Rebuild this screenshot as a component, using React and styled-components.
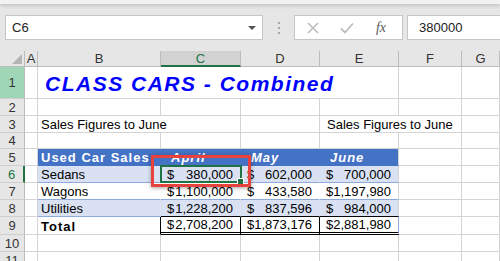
import React from "react";
import styled, { createGlobalStyle } from "styled-components";

const GRID = "#d4d4d4";
const HEAD_LINE = "#bcbcbc";
const BLUE = "#4472c4";
const LIGHT = "#d9e1f2";
const BAND_LINE = "#8ea9db";
const GREEN = "#217346";

const Global = createGlobalStyle`
  html, body { margin: 0; padding: 0; }
  body {
    width: 500px; height: 261px; overflow: hidden;
    background: #e6e6e6;
    font-family: "Liberation Sans", Arial, sans-serif;
  }
`;

const Page = styled.div`
  display: flex;
  flex-direction: column;
  width: 500px;
  height: 261px;
  overflow: hidden;
`;

const RibbonEdge = styled.div`
  flex-shrink: 0;
  height: 4px;
  background: #f3f2f1;
  box-shadow: 0 1px 4px rgba(0, 0, 0, 0.22);
  position: relative;
  z-index: 1;
`;

const FormulaBar = styled.div`
  flex-shrink: 0;
  display: flex;
  align-items: stretch;
  height: 25px;
  padding: 11px 0 11px 5px;
  background: #e6e6e6;
`;

const NameBox = styled.div`
  box-sizing: border-box;
  width: 258px;
  background: #fff;
  border: 1px solid #c6c6c6;
  display: flex;
  align-items: center;
  justify-content: space-between;
  padding: 0 6px 0 6px;
  font-size: 13px;
  color: #222;
`;

const Caret = styled.span`
  width: 0;
  height: 0;
  border-left: 4px solid transparent;
  border-right: 4px solid transparent;
  border-top: 4px solid #555;
`;

const Grip = styled.div`
  width: 31px;
  display: flex;
  flex-direction: column;
  align-items: center;
  justify-content: center;
  gap: 3px;
  span {
    width: 2px;
    height: 2px;
    background: #a6a6a6;
  }
`;

const FxBox = styled.div`
  box-sizing: border-box;
  width: 109px;
  background: #fff;
  border: 1px solid #c6c6c6;
  display: flex;
  align-items: center;
  padding-left: 1px;
`;

const FxSlot = styled.div`
  width: 34px;
  height: 100%;
  display: flex;
  align-items: center;
  justify-content: center;
  font: italic 14px "Liberation Serif", "Times New Roman", serif;
  color: #5a5a5a;
`;

const FormulaInput = styled.div`
  flex: 1;
  margin-left: 4px;
  background: #fff;
  border: 1px solid #c6c6c6;
  border-right: none;
  display: flex;
  align-items: center;
  padding-left: 11px;
  font-size: 13px;
  color: #222;
`;

const SheetWrap = styled.div`
  position: relative;
  flex: 1;
  min-height: 0;
  overflow: hidden;
  background: #fff;
`;

const Sheet = styled.div`
  display: grid;
  grid-template-columns: 25px 13px 123px 80px 79px 79px 63px 1fr;
  grid-template-rows: 16px 32px 17px 17px 16px 17px 17px 17px 17px 18px 17px 17px;
`;

const Corner = styled.div`
  position: relative;
  box-sizing: border-box;
  background: #e6e6e6;
  border-right: 1px solid ${HEAD_LINE};
  border-bottom: 1px solid ${HEAD_LINE};
  &::after {
    content: "";
    position: absolute;
    right: 2px;
    bottom: 2px;
    width: 0;
    height: 0;
    border-left: 10px solid transparent;
    border-bottom: 10px solid #b5b5b5;
  }
`;

const ColHead = styled.div`
  box-sizing: border-box;
  background: ${(p) => (p.$active ? "#d2d2d2" : "#e6e6e6")};
  border-right: 1px solid ${HEAD_LINE};
  border-bottom: ${(p) => (p.$active ? `2px solid ${GREEN}` : `1px solid ${HEAD_LINE}`)};
  display: flex;
  align-items: center;
  justify-content: center;
  font: 13px/13px "Liberation Sans", Arial, sans-serif;
  color: ${(p) => (p.$active ? GREEN : "#333")};
  padding-top: ${(p) => (p.$active ? "1px" : "0")};
`;

const RowHead = styled.div`
  box-sizing: border-box;
  background: ${(p) => p.$bg || "#e6e6e6"};
  border-right: ${(p) => (p.$active ? `2px solid ${GREEN}` : `1px solid ${HEAD_LINE}`)};
  border-bottom: 1px solid #cfcfcf;
  display: flex;
  align-items: center;
  justify-content: center;
  font: 13px/13px "Liberation Sans", Arial, sans-serif;
  color: ${(p) => (p.$active ? GREEN : "#333")};
`;

const Cell = styled.div`
  grid-column: span ${(p) => p.$span || 1};
  box-sizing: border-box;
  min-width: 0;
  background: ${(p) => p.$bg || "#fff"};
  border-right: 1px solid ${(p) => p.$br || GRID};
  border-bottom: ${(p) => p.$bb || `1px solid ${GRID}`};
  display: flex;
  align-items: flex-end;
  justify-content: ${(p) => p.$justify || "flex-start"};
  padding: 0 ${(p) => p.$pr ?? 3}px 1px ${(p) => p.$pl ?? 3}px;
  font-family: "Liberation Sans", Arial, sans-serif;
  font-size: 13px;
  line-height: 13px;
  font-weight: ${(p) => (p.$bold ? 700 : 400)};
  font-style: ${(p) => (p.$italic ? "italic" : "normal")};
  letter-spacing: ${(p) => (p.$bold ? 1 : 0)}px;
  color: ${(p) => p.$color || "#000"};
  white-space: nowrap;
`;

const Title = styled(Cell)`
  font-size: 21px;
  line-height: 21px;
  font-weight: 700;
  font-style: italic;
  letter-spacing: 1.5px;
  color: #0000ff;
  padding-left: 7px;
  padding-bottom: 4px;
`;

const Money = styled(Cell)`
  justify-content: space-between;
  padding-left: 6px;
  padding-right: 7px;
`;

const Selection = styled.div`
  position: absolute;
  left: 160px;
  top: 114px;
  width: 82px;
  height: 18px;
  box-sizing: border-box;
  border: 2px solid ${GREEN};
  pointer-events: none;
  &::after {
    content: "";
    position: absolute;
    right: -4px;
    bottom: -4px;
    width: 5px;
    height: 5px;
    background: ${GREEN};
    border: 1px solid #fff;
  }
`;

const Highlight = styled.div`
  position: absolute;
  left: 151px;
  top: 104px;
  width: 100px;
  height: 32px;
  box-sizing: border-box;
  border: 3px solid #e8423f;
  box-shadow: 0 1px 4px rgba(0, 0, 0, 0.35);
  pointer-events: none;
`;

const cols = ["A", "B", "C", "D", "E", "F", "G"];

const XIcon = () => (
  <svg width="12" height="12" viewBox="0 0 12 12">
    <path d="M1 1 L11 11 M11 1 L1 11" stroke="#bdbdbd" strokeWidth="1.6" fill="none" />
  </svg>
);

const CheckIcon = () => (
  <svg width="14" height="12" viewBox="0 0 14 12">
    <path d="M1 6.5 L5 10.5 L13 1.5" stroke="#bdbdbd" strokeWidth="1.8" fill="none" />
  </svg>
);

const Amount = ({ v, ...rest }) => (
  <Money {...rest}>
    <span>$</span>
    <span>{v}</span>
  </Money>
);

const bandRow = (label, vals, bg, lastBorder) => (
  <>
    <Cell $bg={bg} $br={bg} $bb={`1px solid ${BAND_LINE}`}>{label}</Cell>
    {vals.map((v, i) => (
      <Amount
        key={i}
        v={v}
        $bg={bg}
        $br={i === 2 ? GRID : bg}
        $bb={lastBorder ? "1px solid #000" : `1px solid ${BAND_LINE}`}
      />
    ))}
  </>
);

export default function App() {
  return (
    <Page>
      <Global />
      <RibbonEdge />
      <FormulaBar>
        <NameBox>
          <span>C6</span>
          <Caret />
        </NameBox>
        <Grip>
          <span />
          <span />
          <span />
        </Grip>
        <FxBox>
          <FxSlot><XIcon /></FxSlot>
          <FxSlot><CheckIcon /></FxSlot>
          <FxSlot>fx</FxSlot>
        </FxBox>
        <FormulaInput>380000</FormulaInput>
      </FormulaBar>
      <SheetWrap>
        <Sheet>
          <Corner />
          {cols.map((c) => (
            <ColHead key={c} $active={c === "C"}>{c}</ColHead>
          ))}

          <RowHead $bg="#a0d6b8">1</RowHead>
          <Cell />
          <Title $span={4}>CLASS CARS - Combined</Title>
          <Cell />
          <Cell />

          <RowHead>2</RowHead>
          <Cell /><Cell /><Cell /><Cell /><Cell /><Cell /><Cell />

          <RowHead>3</RowHead>
          <Cell />
          <Cell $span={2}>Sales Figures to June</Cell>
          <Cell />
          <Cell $span={2} $pl={7}>Sales Figures to June</Cell>
          <Cell />

          <RowHead>4</RowHead>
          <Cell /><Cell /><Cell /><Cell /><Cell /><Cell /><Cell />

          <RowHead>5</RowHead>
          <Cell />
          <Cell $bg={BLUE} $br={BLUE} $bb={`1px solid ${BLUE}`} $bold $color="#fff">Used Car Sales</Cell>
          <Cell $bg={BLUE} $br={BLUE} $bb={`1px solid ${BLUE}`} $bold $italic $color="#fff" $pl={10}>April</Cell>
          <Cell $bg={BLUE} $br={BLUE} $bb={`1px solid ${BLUE}`} $bold $italic $color="#fff" $pl={10}>May</Cell>
          <Cell $bg={BLUE} $br={GRID} $bb={`1px solid ${BLUE}`} $bold $italic $color="#fff" $pl={10}>June</Cell>
          <Cell />
          <Cell />

          <RowHead $active>6</RowHead>
          <Cell />
          {bandRow("Sedans", ["380,000", "602,000", "700,000"], LIGHT)}
          <Cell />
          <Cell />

          <RowHead>7</RowHead>
          <Cell />
          {bandRow("Wagons", ["1,100,000", "433,580", "1,197,980"], "#fff")}
          <Cell />
          <Cell />

          <RowHead>8</RowHead>
          <Cell />
          {bandRow("Utilities", ["1,228,200", "837,596", "984,000"], LIGHT, true)}
          <Cell />
          <Cell />

          <RowHead>9</RowHead>
          <Cell />
          <Cell $bold $br="#000" $pl={3}>Total</Cell>
          <Amount v="2,708,200" $br="#000" $bb="3px double #000" />
          <Amount v="1,873,176" $br="#000" $bb="3px double #000" />
          <Amount v="2,881,980" $br={BAND_LINE} $bb="3px double #000" />
          <Cell />
          <Cell />

          <RowHead>10</RowHead>
          <Cell /><Cell /><Cell /><Cell /><Cell /><Cell /><Cell />

          <RowHead>11</RowHead>
          <Cell /><Cell /><Cell /><Cell /><Cell /><Cell /><Cell />
        </Sheet>
        <Selection />
        <Highlight />
      </SheetWrap>
    </Page>
  );
}
